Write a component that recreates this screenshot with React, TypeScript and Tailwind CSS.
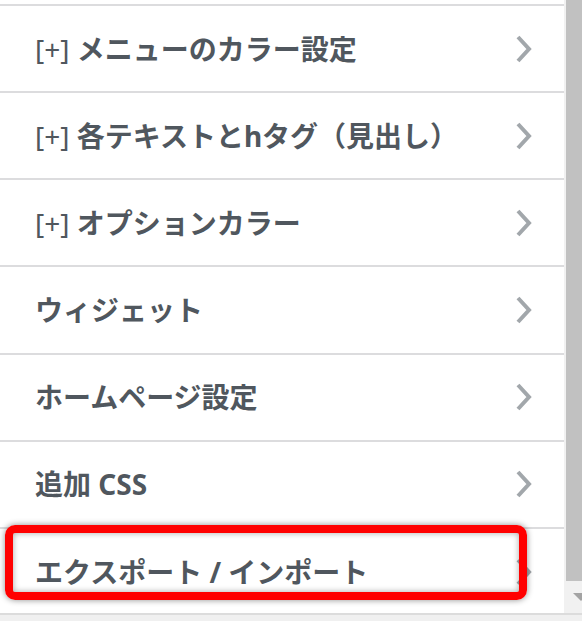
import React from "react";

const items: { p?: boolean; t: string }[] = [
  { p: true, t: "メニューのカラー設定" },
  { p: true, t: "各テキストとhタグ（見出し）" },
  { p: true, t: "オプションカラー" },
  { t: "ウィジェット" },
  { t: "ホームページ設定" },
  { t: "追加 CSS" },
  { t: "エクスポート / インポート" },
];

function Chevron() {
  return (
    <svg width="20" height="28" viewBox="0 0 20 28" className="shrink-0">
      <polyline
        points="4,2 15,14 4,26"
        fill="none"
        stroke="#a2a7ab"
        strokeWidth="4"
        strokeLinejoin="miter"
      />
    </svg>
  );
}

export default function App() {
  return (
    <div
      className="relative w-[582px] h-[621px] overflow-hidden bg-white flex flex-col"
      style={{ fontFamily: '"Noto Sans", "Noto Sans CJK JP", sans-serif' }}
    >
      <div className="flex h-[613px]">
        <div className="w-[564px] pt-[4px] flex flex-col">
          {items.map((it, i) => (
            <div
              key={i}
              className="h-[87.17px] shrink-0 border-t-2 border-[#dcdcde] flex items-center justify-between pl-[35px] pr-[30px]"
            >
              <span className="text-[28px] font-bold text-[#50575e] whitespace-nowrap">
                {it.p && <span className="font-normal">[+] </span>}
                {it.t}
              </span>
              <Chevron />
            </div>
          ))}
        </div>
        <div className="w-[18px] bg-[#f1f1f1] flex flex-col items-end">
          <div className="w-[16px] h-[581px] bg-[#c1c1c1]" />
          <svg width="16" height="10" viewBox="0 0 16 10" className="mt-[12px]">
            <polygon points="0,0 16,0 8,8" fill="#a3a3a3" transform="translate(7,0)" />
          </svg>
        </div>
      </div>
      <div className="h-[8px] border-t-2 border-[#dcdcdc] bg-[#f0f0f0]" />
      <div className="absolute left-[5px] top-[525px] w-[522px] h-[75px] border-[8px] border-[#ff0000] rounded-[10px] shadow-[0_0_6px_rgba(0,0,0,0.45),inset_0_0_6px_rgba(0,0,0,0.35)]" />
    </div>
  );
}
